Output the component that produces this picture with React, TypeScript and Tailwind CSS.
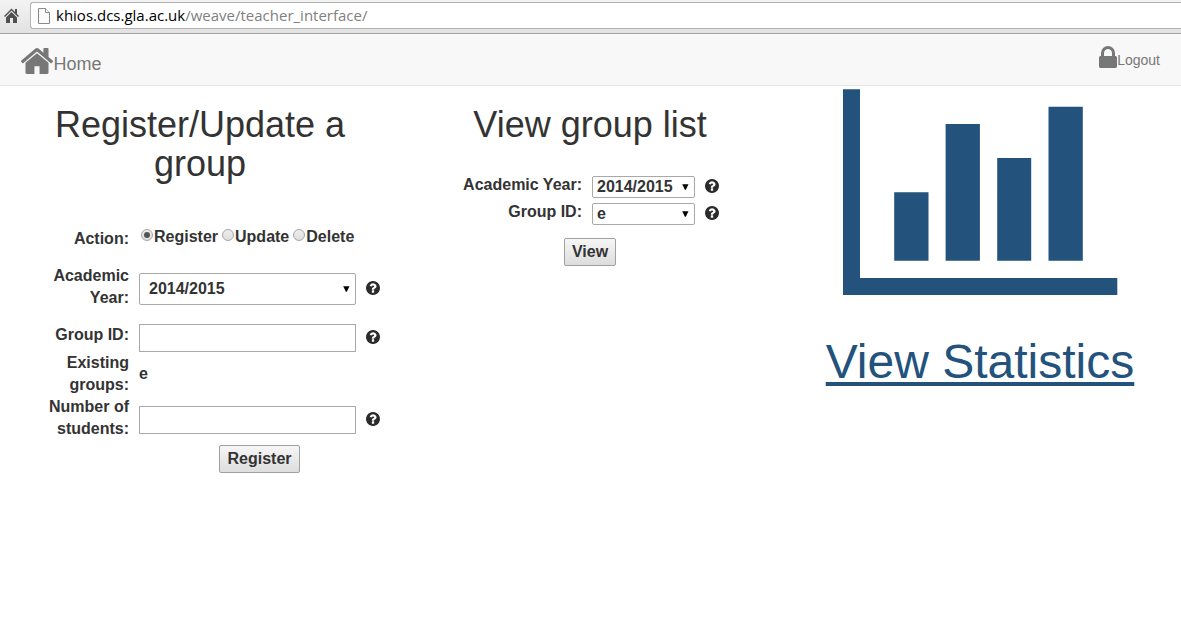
import type { ReactNode } from "react";

function HomeIcon() {
  return (
    <svg className="h-[26px] w-[32px] shrink-0" viewBox="96 253 1600 1283" preserveAspectRatio="none" fill="#777777">
      <path d="M1472 992v480q0 26-19 45t-45 19h-384v-384h-256v384h-384q-26 0-45-19t-19-45v-480q0-1 .5-3t.5-3l575-474 575 474q1 2 1 6zm223-69l-62 74q-8 9-21 11h-3q-13 0-21-7l-692-577-692 577q-12 8-24 7-13-2-21-11l-62-74q-8-10-7-23.5t11-21.5l719-599q32-26 76-26t76 26l244 204v-195q0-14 9-23t23-9h192q14 0 23 9t9 23v408l219 182q10 8 11 21.5t-7 23.5z" />
    </svg>
  );
}

function LockIcon() {
  return (
    <svg className="h-[22px] w-[18px] shrink-0" viewBox="320 128 1152 1408" fill="#777777">
      <path d="M640 768h512v-192q0-106-75-181t-181-75-181 75-75 181v192zm832 96v576q0 40-28 68t-68 28h-960q-40 0-68-28t-28-68v-576q0-40 28-68t68-28h32v-192q0-184 132-316t316-132 316 132 132 316v192h32q40 0 68 28t28 68z" />
    </svg>
  );
}

function HelpIcon({ className = "" }: { className?: string }) {
  return (
    <svg className={`size-[14px] shrink-0 ${className}`} viewBox="128 128 1536 1536" fill="#2b2b2b">
      <path d="M1024 1376v-192q0-14-9-23t-23-9h-192q-14 0-23 9t-9 23v192q0 14 9 23t23 9h192q14 0 23-9t9-23zm256-672q0-88-55.5-163t-138.5-116-170-41q-243 0-371 213-15 24 8 42l132 100q7 6 19 6 16 0 25-12 53-68 86-92 34-24 86-24 48 0 85.5 26t37.5 59q0 38-20 61t-68 45q-63 28-115.5 86.5t-52.5 125.5v36q0 14 9 23t23 9h192q14 0 23-9t9-23q0-19 21.5-49.5t54.5-49.5q32-18 49-28.5t46-35 44.5-48 28-60.5 12.5-81zm384 192q0 209-103 385.5t-279.5 279.5-385.5 103-385.5-103-279.5-279.5-103-385.5 103-385.5 279.5-279.5 385.5-103 385.5 103 279.5 279.5 103 385.5z" />
    </svg>
  );
}

function ChartIcon() {
  return (
    <svg className="h-[206px] w-[275px]" viewBox="0 0 275 206" fill="#23527c">
      <path d="M-.3.3H17V189h257.300v17H-.3zM51.200 103.200h34.300v68.500H51.200zM102.600 35h34.300v136.700h-34.300zM154.200 69h34v102.700h-34zM205.500 17.700h34.300v154h-34.300z" />
    </svg>
  );
}

function BrowserBar() {
  return (
    <div className="flex h-[34px] items-start border-b border-[#a3a3a3] bg-linear-to-b from-[#f3f3f3] to-[#e2e2e2] pl-1">
      <svg className="mt-2 h-4 w-[15px] shrink-0" viewBox="0 0 15 16" fill="#505050">
        <path d="M7.5.5 0 8l1 1 6.500-6.500L14 9l1-1-2-2V1h-2v3z" />
        <path d="M7.500 4 2 9.500V15h4v-5h3v5h4V9.500z" />
      </svg>
      <div className="ml-[11px] mt-[2px] flex h-[27px] flex-1 items-center rounded-l-[3px] border border-r-0 border-[#b3b3b3] bg-white pl-[7px]">
        <svg className="h-4 w-3 shrink-0" viewBox="0 0 12 16" fill="#fafafa" stroke="#8a8a8a">
          <path d="M.5.5h7l4 4v11H.5z" />
          <path d="M7.500.5v4h4" />
        </svg>
        <span className="ml-[6px] whitespace-nowrap pb-[2px] font-['Open_Sans','Noto_Sans',sans-serif] text-[15px] leading-5 text-[#808080]">
          <span className="text-black">khios.dcs.gla.ac.uk</span>/weave/teacher_interface/
        </span>
      </div>
    </div>
  );
}

function Label({ children, className = "" }: { children: ReactNode; className?: string }) {
  return <div className={`text-right ${className}`}>{children}</div>;
}

function Arrow() {
  return (
    <svg className="h-[6px] w-[7px]" viewBox="0 0 7 6">
      <path d="M.2.2h6.300L3.800 5.700h-.9z" fill="#000" />
    </svg>
  );
}

function Select({ value, className }: { value: string; className: string }) {
  return (
    <div className={`flex items-center justify-between rounded-[2px] border border-[#a9a9a9] bg-white ${className}`}>
      <span>{value}</span>
      <Arrow />
    </div>
  );
}

function Radio({ label, checked = false }: { label: string; checked?: boolean }) {
  return (
    <span className="flex items-start">
      <span className="mt-[3px] flex size-3 items-center justify-center rounded-full border border-[#a5a5a5] bg-linear-to-b from-[#ededed] to-[#dedede]">
        {checked && <span className="size-[6px] rounded-full bg-[#555]" />}
      </span>
      <span className="ml-px">{label}</span>
    </span>
  );
}

function Button({ children, className }: { children: string; className: string }) {
  return (
    <button className={`h-7 rounded-[2px] border border-[#a0a0a0] bg-linear-to-b from-[#f6f6f6] to-[#dddddd] font-bold ${className}`}>
      {children}
    </button>
  );
}

function RegisterPanel() {
  return (
    <section className="w-[390px]">
      <h1 className="mx-auto w-[330px] text-center text-[36px] font-normal leading-[39px]">Register/Update a group</h1>
      <div className="mt-[45px] pl-[34px]">
        <div className="flex h-[37px] gap-[12px]">
          <Label className="w-[90px]">Action:</Label>
          <div className="-mt-[2px] flex gap-[4px]">
            <Radio label="Register" checked />
            <Radio label="Update" />
            <Radio label="Delete" />
          </div>
        </div>
        <div className="flex h-[59px] gap-[10px]">
          <Label className="w-[90px]">Academic Year:</Label>
          <Select value="2014/2015" className="mt-[8px] h-8 w-[217px] pb-px pl-[9px] pr-[5px]" />
          <HelpIcon className="mt-[16px]" />
        </div>
        <div className="flex h-[28px] gap-[10px]">
          <Label className="w-[90px]">Group ID:</Label>
          <input className="h-7 w-[217px] border border-[#a9a9a9] bg-white" />
          <HelpIcon className="mt-[6px]" />
        </div>
        <div className="flex h-[44px] items-center gap-[10px]">
          <Label className="w-[90px]">Existing<br />groups:</Label>
          <span>e</span>
        </div>
        <div className="flex h-[49px] gap-[10px]">
          <Label className="w-[90px]">Number of students:</Label>
          <input className="mt-[10px] h-7 w-[217px] border border-[#a9a9a9] bg-white" />
          <HelpIcon className="mt-[16px]" />
        </div>
        <Button className="ml-[180px] w-[81px] pb-px">Register</Button>
      </div>
    </section>
  );
}

function ViewPanel() {
  return (
    <section className="w-[390px]">
      <h1 className="text-center text-[36px] font-normal leading-[39px]">View group list</h1>
      <div className="mt-[30px] flex flex-col">
        <div className="flex h-[27px] gap-[10px]">
          <Label className="w-[187px]">Academic Year:</Label>
          <Select value="2014/2015" className="mt-[2px] h-[22px] w-[103px] pl-1 pr-[5px]" />
          <HelpIcon className="mt-[5px]" />
        </div>
        <div className="flex h-[37px] gap-[10px]">
          <Label className="w-[187px]">Group ID:</Label>
          <Select value="e" className="mt-[2px] h-[22px] w-[103px] pl-1 pr-[5px]" />
          <HelpIcon className="mt-[5px]" />
        </div>
        <Button className="ml-[169px] w-[52px]">View</Button>
      </div>
    </section>
  );
}

function StatisticsPanel() {
  return (
    <a className="-mt-4 flex w-[390px] flex-col items-center text-[#23527c]">
      <ChartIcon />
      <span className="mt-[40px] whitespace-nowrap text-[48px] leading-[53px] underline decoration-[4px] underline-offset-[4px]">View Statistics</span>
    </a>
  );
}

export default function App() {
  return (
    <div className="h-[641px] w-[1181px] overflow-hidden bg-white font-['Liberation_Sans',Arial,sans-serif] text-[16px] leading-[22px] text-[#333]">
      <BrowserBar />
      <nav className="flex h-[52px] justify-between border-b border-[#e7e7e7] bg-[#f8f8f8] pl-[21px] pr-[21px] text-[#777]">
        <a className="flex items-start pt-[14px] text-[18px]">
          <HomeIcon />
          <span className="ml-[0.5px] mt-[5px]">Home</span>
        </a>
        <a className="flex items-start pt-[12px] text-[14px]">
          <LockIcon />
          <span className="mt-[3px]">Logout</span>
        </a>
      </nav>
      <main className="flex pl-[5px] pt-[19px] font-bold [&_a]:font-normal">
        <RegisterPanel />
        <ViewPanel />
        <StatisticsPanel />
      </main>
    </div>
  );
}
